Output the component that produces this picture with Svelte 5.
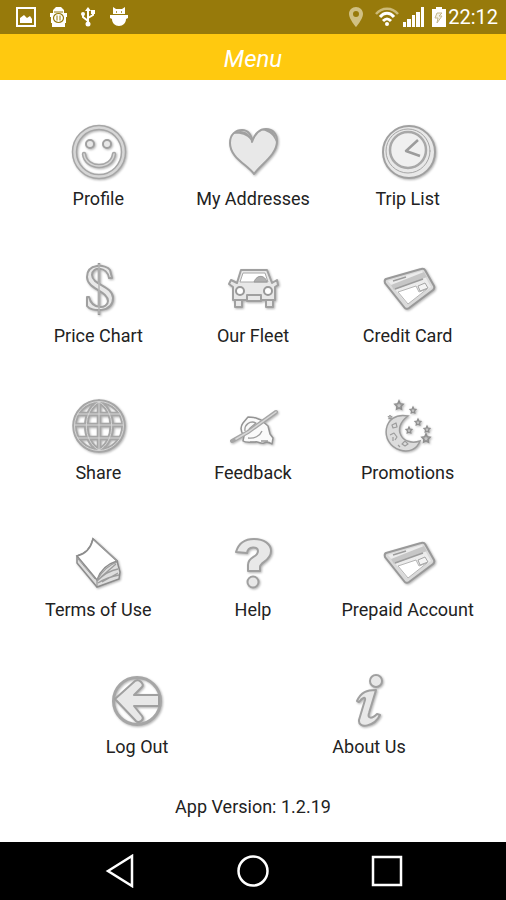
<script>
    const items = [
        { icon: 'profile', label: 'Profile' },
        { icon: 'heart', label: 'My Addresses' },
        { icon: 'clock', label: 'Trip List' },
        { icon: 'dollar', label: 'Price Chart' },
        { icon: 'car', label: 'Our Fleet' },
        { icon: 'card', label: 'Credit Card' },
        { icon: 'globe', label: 'Share' },
        { icon: 'write', label: 'Feedback' },
        { icon: 'moon', label: 'Promotions' },
        { icon: 'book', label: 'Terms of Use' },
        { icon: 'question', label: 'Help' },
        { icon: 'card', label: 'Prepaid Account' },
        { icon: 'logout', label: 'Log Out', wide: true },
        { icon: 'info', label: 'About Us', wide: true }
    ];

    // x, y, size
    const stars = [
        [21, 9, 4], [35, 14, 3], [40, 26, 3], [31, 34, 3],
        [49, 33, 3], [48, 42, 4], [12, 21, 2]
    ];
</script>

{#snippet icon(name)}
    <svg class="icon" viewBox="0 0 60 60" aria-hidden="true">
        {#if name === 'profile'}
            <circle class="edge" cx="31" cy="30" r="24.5" stroke-width="5.5" />
            <circle class="face" cx="31" cy="30" r="24.5" stroke-width="2.5" />
            <circle class="solid" cx="22" cy="22" r="4" />
            <circle class="solid" cx="39" cy="22" r="4" />
            <path class="edge" d="M16 32c2 16 28 16 30 0" stroke-width="4.5" />
            <path class="face" d="M16 32c2 16 28 16 30 0" stroke-width="1.5" />
        {:else if name === 'heart'}
            <path class="solid" d="M31 52C25 43 7 36 7 21 7 12 13 8 19 8c6 0 10 5 10 12C32 11 37 7 43 7c7 0 11 5 11 12 0 14-16 23-23 33z" />
            <path d="M10 12c6-6 18-3 19 8-4-7-11-9-19-8zM39 8c7-3 15 2 14 12-2-6-6-10-14-12z" fill="#a0a0a0" />
        {:else if name === 'clock'}
            <circle class="solid" cx="31" cy="30" r="26" />
            <circle class="edge" cx="30" cy="29" r="22" stroke-width="1" />
            <circle cx="30" cy="28" r="18" fill="#f0f0f0" stroke="#a8a8a8" stroke-width="2.5" />
            <path class="shade" d="M40 18L28 29l14 5" stroke-width="2.5" />
        {:else if name === 'dollar'}
            <path d="M31 4v52" stroke="#999" stroke-width="2.5" />
            <path class="solid" d="M44 19h-3C39 7 24 7 24 16c0 10 21 11 21 23 0 15-22 14-26 8v-9h2c3 13 19 12 19 4 0-10-21-12-21-24C19 4 38 5 42 11z" stroke-width="1.5" />
            <path d="M31 5v50" stroke="#b5b5b5" stroke-width="1.5" />
        {:else if name === 'car'}
            <path class="solid" d="M12 40h7v8h-7zM43 40h7v8h-7z" />
            <path class="solid" d="M14 24l4-13h26l5 13 5-3 1 5-3 2v13H10V28l-4-3 2-4z" />
            <path class="white" d="M17 23l3-9h22l3 9z" />
            <path d="M31 23c3-8 11-7 13 0z" fill="#b0b0b0" stroke="#999" />
            <circle cx="17" cy="32" r="4" fill="#fff" stroke="#999" stroke-width="2" />
            <circle cx="45" cy="32" r="4" fill="#fff" stroke="#999" stroke-width="2" />
            <path class="solid" d="M24 36h14v6H24z" />
        {:else if name === 'card'}
            <path d="M8 20L43 10q3-1 4 1l9 16q1 2-1 4L31 49q-3 2-5-1L7 24q-1-3 1-4z" fill="#dadada" stroke="#999" stroke-width="2" />
            <path d="M10 22l34-10 9 16-24 17z" fill="#ececec" />
            <path d="M13 26l33-13 3 5-33 13z" fill="#c6c6c6" />
            <path d="M20 33l18-6 3 6 8-3-19 15z" fill="#fff" stroke="#b5b5b5" />
            <path class="shade" d="M15 22l13-4M17 30l28-10" stroke-width="1.5" />
            <path d="M40 27l7-3 3 5-8 3z" fill="#f4f4f4" stroke="#a5a5a5" />
        {:else if name === 'globe'}
            <g class="edge" stroke-width="4.5">
                <circle cx="31" cy="30" r="24.5" />
                <path d="M31 6v48M10 18h42M7 29h48M10 42h42M31 6C14 14 14 46 31 54M31 6c17 8 17 40 0 48" />
            </g>
            <g class="face" stroke-width="1">
                <circle cx="31" cy="30" r="24.5" />
                <path d="M31 6v48M10 18h42M7 29h48M10 42h42M31 6C14 14 14 46 31 54M31 6c17 8 17 40 0 48" />
            </g>
        {:else if name === 'write'}
            <path d="M21 40c-3-4-4-9-1-13l5-6c4 0 9 1 13 3l7 6 2 8 3 4-1 6c-3-2-5-3-8-1-4 1-6-2-9-1-5 0-9 1-12-1z" fill="#fafafa" stroke="#949494" stroke-width="1.5" stroke-linejoin="round" />
            <path class="shade" d="M22 35c-1-6 5-11 11-8l-7 6M25 42c6 1 12-2 14-7M27 46h6M38 45h7" stroke-width="1.3" />
            <path class="edge" d="M9 45l16-9 28-20" stroke-width="4" />
            <path class="face" d="M13 43l12-7 28-20" stroke-width="1.5" />
        {:else if name === 'moon'}
            <path d="M30 20C4 15 1 48 22 54c9 3 17-1 20-9-18 6-29-13-12-25z" fill="#dcdcdc" stroke="#9c9c9c" stroke-width="1.5" />
            <path class="shade" d="M14 29l4-2 1 4-4 1zM12 39l4-2 3 4-2 3M15 41v4M24 48l3-3 3 3-3 2zM20 49l2 2" stroke-width="1.2" />
            {#each stars as [x, y, size]}
                <path d="M0-5l1.500 3.500L5-1 2.500 1.500 3 5 0 3.500-3 5l.5-3.500L-5-1l3.500-.5z" transform="translate({x} {y}) scale({size / 5})" fill="#c4c4c4" stroke="#8f8f8f" stroke-width="2" />
            {/each}
        {:else if name === 'book'}
            <path d="M25 6c-2 9-8 15-16 17v7l20 24 22-8 1-7-3-11z" fill="#dedede" stroke="#8c8c8c" stroke-width="1.5" />
            <path d="M25 6c-2 9-8 15-16 17l20 24c3-9 10-16 20-19z" fill="#fff" stroke="#8c8c8c" stroke-width="1.5" />
            <path class="shade" d="M26 7l23 21M29 47v6M29 47c5-9 12-15 20-18M29 48c7-7 15-11 21-12M30 50c8-5 15-7 21-8M34 49l16-9M33 44l15-13" stroke-width="1.3" />
            <path class="shade" d="M10 26l17 20" stroke-width="1" />
        {:else if name === 'question'}
            <path class="solid" d="M13 19C16 9 23 6 31 6c10 0 17 5 17 12 0 10-11 11-11 16v4H25v-6c0-9 10-7 10-14 0-5-10-5-11 2z" />
            <circle class="solid" cx="30" cy="49" r="5.5" />
        {:else if name === 'logout'}
            <circle class="edge" cx="30" cy="31" r="23.5" stroke-width="3" />
            <path class="solid" d="M8 29l20-18q3-2 6 1t1 5l-8 8h25v11H27l8 10q2 3-1 5t-5 0z" />
        {:else if name === 'info'}
            <circle class="solid" cx="37" cy="11" r="6" />
            <path class="solid" d="M18 31c4-9 10-11 19-11l-7 23c-2 6 3 6 8 1l3 1c-5 11-22 15-21 5l6-20c1-4-3-2-6 2z" />
        {/if}
    </svg>
{/snippet}

<div class="app">
    <div class="status">
        <div class="status-group notices">
            <svg width="20" height="20" viewBox="0 0 20 20">
                <path d="M1 1h18v18H1z" fill="none" stroke="#fff" stroke-width="2" />
                <path d="M4 16v-5l4-3 3 3 3-2 2 3v4z" fill="#fff" />
            </svg>
            <svg width="17" height="20" viewBox="0 0 17 20">
                <path d="M3 6V3l3-3h5l3 3v3h3v4h-1v6h-1v4H2v-4H1v-6H0V6z" fill="#fff" />
                <path d="M4 5h9" stroke="#977a0b" />
                <ellipse cx="8.5" cy="11" rx="5" ry="4.5" fill="none" stroke="#977a0b" stroke-width="1.2" />
                <path d="M7 8.500v5M10 8.500v5" stroke="#977a0b" />
            </svg>
            <svg width="14" height="20" viewBox="0 0 14 20">
                <path d="M7 2v15M7 14l-5-4V7M7 11l5-3V5" fill="none" stroke="#fff" stroke-width="2" />
                <path d="M7 0l3 4H4zM10 3h4v4h-4z" fill="#fff" />
                <circle cx="2" cy="7" r="2" fill="#fff" />
                <circle cx="7" cy="17" r="2.5" fill="#fff" />
            </svg>
            <svg width="20" height="20" viewBox="0 0 20 20">
                <path d="M4 0l3 2h6l3-2v7H4zM1 8h18v3H1zM3 11h14l2 1h-2c0 4-3 7-7 7s-7-3-7-7H1z" fill="#fff" />
                <path d="M7 5h1M12 5h1" stroke="#977a0b" stroke-width="1.5" />
            </svg>
        </div>
        <div class="status-group">
            <svg class="pin" width="14" height="20" viewBox="0 0 14 20">
                <path d="M7 0C3 0 0 3 0 7c0 5 7 13 7 13s7-8 7-13c0-4-3-7-7-7zm0 4a3 3 0 1 1 0 6 3 3 0 0 1 0-6z" fill="#d0c083" fill-rule="evenodd" />
            </svg>
            <svg class="wifi" width="24" height="20" viewBox="0 0 24 20">
                <path d="M1 7c6-7 16-7 22 0" fill="none" stroke="#cdbb78" stroke-width="2.5" />
                <path d="M5 10c4-5 10-5 14 0M8 14c3-3 5-3 8 0" fill="none" stroke="#fff" stroke-width="3" />
                <circle cx="12" cy="17" r="2" fill="#fff" />
            </svg>
            <svg class="signal" width="22" height="20" viewBox="0 0 22 20">
                <path d="M0 15h3v5H0zM4 12h4v8H4zM9 8h3v12H9zM13 5h4v15h-4zM18 0h3v20h-3z" fill="#fff" />
            </svg>
            <svg class="battery" width="14" height="20" viewBox="0 0 14 20">
                <path d="M4 0h6v2h4v18H0V2h4z" fill="#fff" />
                <path d="M5 6L3 11h3l-1 5 5-7H7l3-3z" fill="#f3f0e6" stroke="#c4b88c" />
            </svg>
            <time>22:12</time>
        </div>
    </div>

    <header>
        <h1>Menu</h1>
    </header>

    <main>
        <nav class="menu" aria-label="Menu">
            {#each items as item}
                <a href="#{item.label.toLowerCase().replaceAll(' ', '-')}" class:wide={item.wide}>
                    {@render icon(item.icon)}
                    <span>{item.label}</span>
                </a>
            {/each}
        </nav>
        <p class="version">App Version: 1.2.19</p>
    </main>

    <footer>
        <button type="button" aria-label="Back">
            <svg width="32" height="34" viewBox="0 0 32 34"><path d="M5 17L29 2v30z" /></svg>
        </button>
        <button type="button" aria-label="Home">
            <svg width="34" height="34" viewBox="0 0 34 34"><circle cx="17" cy="17" r="14.5" /></svg>
        </button>
        <button type="button" aria-label="Recent apps">
            <svg width="34" height="34" viewBox="0 0 34 34"><path d="M3 3h28v28H3z" /></svg>
        </button>
    </footer>
</div>

<style>
    :global(body) {
        margin: 0;
        background: #fff;
    }
    .app {
        display: flex;
        flex-direction: column;
        min-height: 100vh;
        font-family: Roboto, "Noto Sans", sans-serif;
        color: #222;
    }
    .status {
        display: flex;
        justify-content: space-between;
        align-items: center;
        height: 34px;
        padding: 0 8px 0 16px;
        background: #977a0b;
        color: #fff;
    }
    .status-group {
        display: flex;
        align-items: center;
    }
    .notices {
        gap: 14px;
    }
    .pin {
        margin-right: 12px;
    }
    .wifi {
        margin-right: 4px;
    }
    .signal {
        margin-right: 7px;
    }
    .battery {
        margin-right: 2px;
    }
    time {
        font-size: 20px;
        line-height: 24px;
    }
    header {
        display: flex;
        justify-content: center;
        padding: 9px 0 5px;
        background: #ffc90f;
    }
    h1 {
        margin: 0;
        font-size: 24px;
        line-height: 32px;
        font-weight: 400;
        font-style: italic;
        color: #fff;
    }
    main {
        flex: 1;
        padding: 42px 21px 25px;
    }
    .menu {
        display: grid;
        grid-template-columns: repeat(6, minmax(0, 1fr));
        row-gap: 50px;
    }
    .menu a {
        grid-column: span 2;
        display: flex;
        flex-direction: column;
        align-items: center;
        gap: 7px;
        font-size: 18px;
        line-height: 20px;
        color: inherit;
        text-decoration: none;
        white-space: nowrap;
    }
    .menu a.wide {
        grid-column: span 3;
    }
    .version {
        margin: 40px 0 0;
        font-size: 18px;
        line-height: 20px;
        text-align: center;
    }
    .icon {
        width: 60px;
        height: 60px;
        filter: drop-shadow(1px 1px 1px rgba(0, 0, 0, 0.3));
    }
    .edge {
        fill: none;
        stroke: #a6a6a6;
        stroke-linecap: round;
    }
    .face {
        fill: none;
        stroke: #d6d6d6;
        stroke-linecap: round;
    }
    .shade {
        fill: none;
        stroke: #9c9c9c;
        stroke-linejoin: round;
    }
    .solid {
        fill: #e8e8e8;
        stroke: #a0a0a0;
        stroke-width: 2;
        stroke-linejoin: round;
    }
    .white {
        fill: #fff;
        stroke: #a8a8a8;
    }
    footer {
        display: flex;
        justify-content: center;
        height: 58px;
        background: #000;
    }
    button {
        flex: 0 1 134px;
        display: flex;
        justify-content: center;
        align-items: center;
        padding: 0;
        border: 0;
        background: none;
        cursor: pointer;
    }
    button svg {
        fill: none;
        stroke: #fff;
        stroke-width: 2.5;
    }
</style>
